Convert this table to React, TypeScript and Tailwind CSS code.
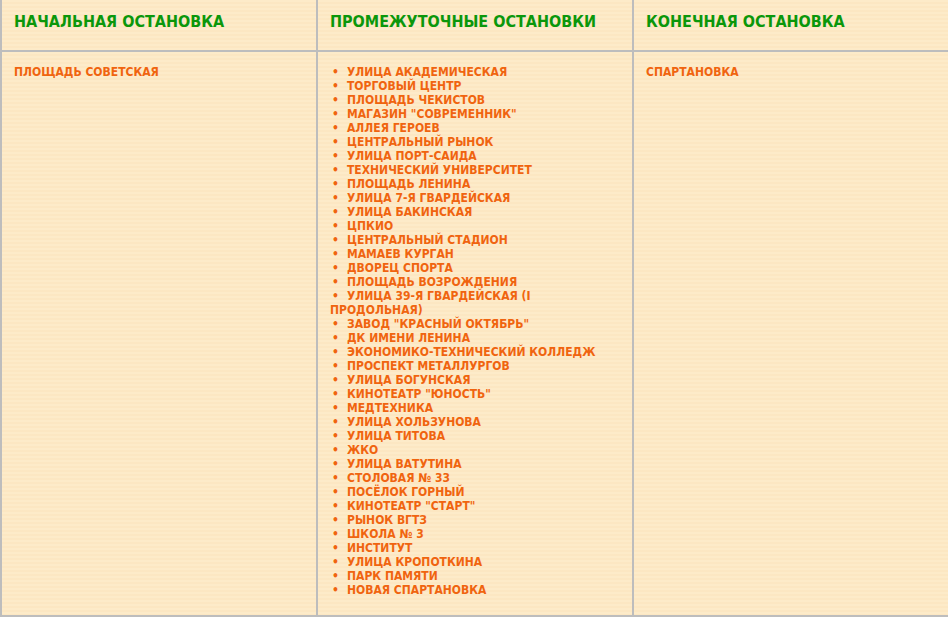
const stops = [
  'УЛИЦА АКАДЕМИЧЕСКАЯ',
  'ТОРГОВЫЙ ЦЕНТР',
  'ПЛОЩАДЬ ЧЕКИСТОВ',
  'МАГАЗИН "СОВРЕМЕННИК"',
  'АЛЛЕЯ ГЕРОЕВ',
  'ЦЕНТРАЛЬНЫЙ РЫНОК',
  'УЛИЦА ПОРТ-САИДА',
  'ТЕХНИЧЕСКИЙ УНИВЕРСИТЕТ',
  'ПЛОЩАДЬ ЛЕНИНА',
  'УЛИЦА 7-Я ГВАРДЕЙСКАЯ',
  'УЛИЦА БАКИНСКАЯ',
  'ЦПКИО',
  'ЦЕНТРАЛЬНЫЙ СТАДИОН',
  'МАМАЕВ КУРГАН',
  'ДВОРЕЦ СПОРТА',
  'ПЛОЩАДЬ ВОЗРОЖДЕНИЯ',
  'УЛИЦА 39-Я ГВАРДЕЙСКАЯ (I ПРОДОЛЬНАЯ)',
  'ЗАВОД "КРАСНЫЙ ОКТЯБРЬ"',
  'ДК ИМЕНИ ЛЕНИНА',
  'ЭКОНОМИКО-ТЕХНИЧЕСКИЙ КОЛЛЕДЖ',
  'ПРОСПЕКТ МЕТАЛЛУРГОВ',
  'УЛИЦА БОГУНСКАЯ',
  'КИНОТЕАТР "ЮНОСТЬ"',
  'МЕДТЕХНИКА',
  'УЛИЦА ХОЛЬЗУНОВА',
  'УЛИЦА ТИТОВА',
  'ЖКО',
  'УЛИЦА ВАТУТИНА',
  'СТОЛОВАЯ № 33',
  'ПОСЁЛОК ГОРНЫЙ',
  'КИНОТЕАТР "СТАРТ"',
  'РЫНОК ВГТЗ',
  'ШКОЛА № 3',
  'ИНСТИТУТ',
  'УЛИЦА КРОПОТКИНА',
  'ПАРК ПАМЯТИ',
  'НОВАЯ СПАРТАНОВКА',
]

const headers = ['НАЧАЛЬНАЯ ОСТАНОВКА', 'ПРОМЕЖУТОЧНЫЕ ОСТАНОВКИ', 'КОНЕЧНАЯ ОСТАНОВКА']

const cell = 'border-r-2 border-[#bdbdbd] pl-3 pr-2'

export default function App() {
  return (
    <div className="h-[617px] w-full overflow-hidden bg-[#fde9c5] bg-[repeating-linear-gradient(180deg,#fdebc9_0px,#fdebc9_2px,#fbe3bc_3px,#fdebc9_4px)] font-['DejaVu_Sans_Condensed','DejaVu_Sans',sans-serif]">
      <div className="w-[950px] border-b-2 border-l-2 border-[#bdbdbd]">
        <div className="grid h-[52px] grid-cols-[316px_316px_316px] border-b-2 border-[#bdbdbd]">
          {headers.map((h) => (
            <div key={h} className={`${cell} pt-3 text-base font-bold leading-5 text-[#0b970b]`}>
              {h}
            </div>
          ))}
        </div>
        <div className="grid h-[563px] grid-cols-[316px_316px_316px] text-xs font-bold leading-[14px] text-[#f0640f]">
          <div className={`${cell} pt-[13px]`}>ПЛОЩАДЬ СОВЕТСКАЯ</div>
          <div className={`${cell} pt-[13px]`}>
            <ul>
              {stops.map((s) => {
                const wrap = s.endsWith('(I ПРОДОЛЬНАЯ)')
                return (
                  <li key={s}>
                    <span className="inline-block w-[17px] pl-[2px]">•</span>
                    {wrap ? (
                      <>
                        УЛИЦА 39-Я ГВАРДЕЙСКАЯ (I
                        <br />
                        ПРОДОЛЬНАЯ)
                      </>
                    ) : (
                      s
                    )}
                  </li>
                )
              })}
            </ul>
          </div>
          <div className={`${cell} pt-[13px]`}>СПАРТАНОВКА</div>
        </div>
      </div>
    </div>
  )
}
